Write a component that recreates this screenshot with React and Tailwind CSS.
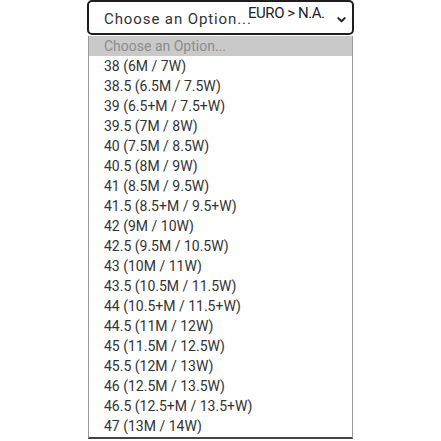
import React from "react";

const sizes = [
  "38 (6M / 7W)",
  "38.5 (6.5M / 7.5W)",
  "39 (6.5+M / 7.5+W)",
  "39.5 (7M / 8W)",
  "40 (7.5M / 8.5W)",
  "40.5 (8M / 9W)",
  "41 (8.5M / 9.5W)",
  "41.5 (8.5+M / 9.5+W)",
  "42 (9M / 10W)",
  "42.5 (9.5M / 10.5W)",
  "43 (10M / 11W)",
  "43.5 (10.5M / 11.5W)",
  "44 (10.5+M / 11.5+W)",
  "44.5 (11M / 12W)",
  "45 (11.5M / 12.5W)",
  "45.5 (12M / 13W)",
  "46 (12.5M / 13.5W)",
  "46.5 (12.5+M / 13.5+W)",
  "47 (13M / 14W)",
];

function App() {
  return (
    <div className="w-[441px] h-[441px] bg-white overflow-hidden" style={{ fontFamily: "Roboto, 'Liberation Sans', sans-serif" }}>
      <div className="ml-[87px] w-[267px]">
        {/* select box */}
        <div className="relative h-[35px] border-2 border-[#1e1e1e] rounded-[5px] flex items-center pl-[15px] pr-2">
          <span className="text-[15px] tracking-[0.06em] text-[#333] mt-[3px]">Choose an Option...</span>
          <span className="absolute left-[159px] top-[2px] text-[15px] leading-[18px] text-[#222] tracking-[-0.03em]">EURO &gt; N.A.</span>
          <svg className="absolute right-[5px] top-[12px] w-[11px] h-[11px]" viewBox="0 0 12 12" fill="none">
            <path d="M2.5 4.5 L6 8 L9.5 4.5" stroke="#222" strokeWidth="2.2" strokeLinecap="round" strokeLinejoin="round" />
          </svg>
        </div>
        {/* options list */}
        <div className="mt-[1px] ml-[1px] w-[265px] border-l border-r border-[#9a9a9a] border-b-2 border-b-[#444] pb-[1px]">
          <div className="h-[20px] bg-[#c9c9c9] pl-[15px] text-[14px] leading-[20px] text-[#8c8c8c]">Choose an Option...</div>
          {sizes.map((s, i) => (
            <div key={i} className="h-[20px] pl-[15px] text-[14px] leading-[20px] text-[#333]">
              {s}
            </div>
          ))}
        </div>
      </div>
    </div>
  );
}

export default App;
